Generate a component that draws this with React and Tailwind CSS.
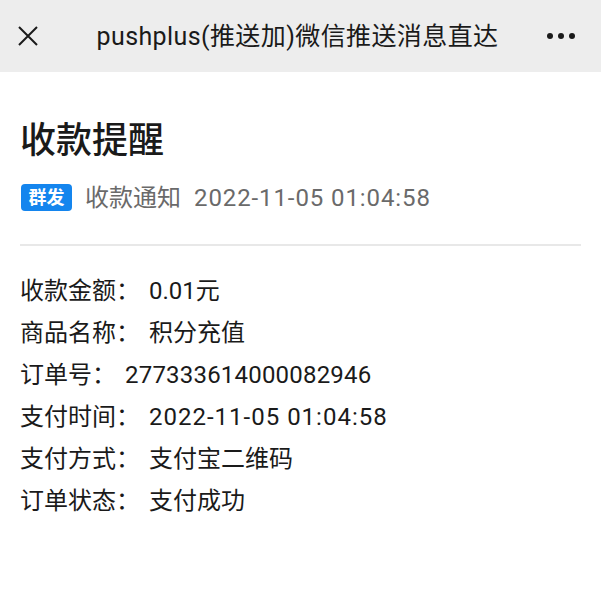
export default function App() {
  const rows = [
    ["收款金额：", "0.01元", ""],
    ["商品名称：", "积分充值", ""],
    ["订单号：", "277333614000082946", "tracking-[0.2px]"],
    ["支付时间：", "2022-11-05 01:04:58", "tracking-[1px]"],
    ["支付方式：", "支付宝二维码", ""],
    ["订单状态：", "支付成功", ""],
  ];
  return (
    <div
      className="w-[601px] h-[609px] bg-white overflow-hidden"
      style={{ fontFamily: '"Roboto", "Noto Sans CJK SC", sans-serif' }}
    >
      <div className="h-[72px] bg-[#ededed] flex items-center">
        <div className="w-[60px] pl-[18px] shrink-0 flex items-center">
          <svg width="20" height="20" viewBox="0 0 20 20">
            <path d="M1 1L19 19M19 1L1 19" stroke="#1a1a1a" strokeWidth="2" />
          </svg>
        </div>
        <div className="flex-1 text-center text-[25px] text-[#1a1a1a] leading-none pr-[6px] tracking-[0.4px] whitespace-nowrap">
          pushplus(推送加)微信推送消息直达
        </div>
        <div className="w-[60px] pr-[26px] shrink-0 flex gap-[5px] justify-end">
          <span className="w-[6px] h-[6px] rounded-full bg-[#1a1a1a]" />
          <span className="w-[6px] h-[6px] rounded-full bg-[#1a1a1a]" />
          <span className="w-[6px] h-[6px] rounded-full bg-[#1a1a1a]" />
        </div>
      </div>
      <div className="px-[20px]">
        <div className="pt-[51px] text-[36px] font-medium text-[#1a1a1a] leading-none">
          收款提醒
        </div>
        <div className="mt-[25px] flex items-center">
          <span className="ml-[1px] bg-[#1485ee] text-white text-[18px] font-bold rounded-[4px] w-[51px] h-[27px] flex items-center justify-center leading-none">
            群发
          </span>
          <span className="ml-[13px] text-[24px] text-[#6a6a6a] leading-none">收款通知</span>
          <span className="ml-[13px] text-[24px] text-[#6a6a6a] leading-none tracking-[0.9px]">
            2022-11-05 01:04:58
          </span>
        </div>
        <div className="mt-[33px] h-[2px] bg-[#e8e8e8]" />
        <div className="pt-[24px] flex flex-col">
          {rows.map(([k, v, t]) => (
            <div key={k} className="flex text-[24px] text-[#1a1a1a] leading-[42px]">
              <span>{k}</span>
              <span className={"ml-[9px] " + t}>{v}</span>
            </div>
          ))}
        </div>
      </div>
    </div>
  );
}
